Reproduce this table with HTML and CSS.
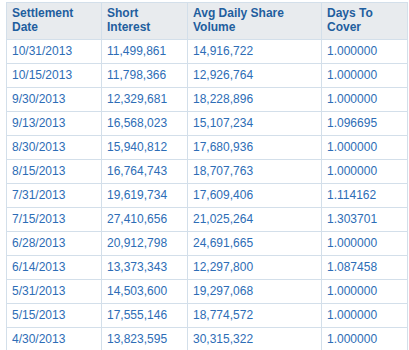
FILE: index.html
```html
<!doctype html>
<html lang="en">
  <head>
    <meta charset="UTF-8">
    <title>Short Interest</title>
    <link rel="stylesheet" href="styles.css">
  </head>
  <body>
    <table class="short-table">
      <colgroup>
        <col class="col-date">
        <col class="col-short">
        <col class="col-avg">
        <col class="col-days">
      </colgroup>
      <thead>
        <tr>
          <th>Settlement<br>Date</th>
          <th>Short<br>Interest</th>
          <th>Avg Daily Share<br>Volume</th>
          <th>Days To<br>Cover</th>
        </tr>
      </thead>
      <tbody>
        <tr><td>10/31/2013</td><td>11,499,861</td><td>14,916,722</td><td>1.000000</td></tr>
        <tr><td>10/15/2013</td><td>11,798,366</td><td>12,926,764</td><td>1.000000</td></tr>
        <tr><td>9/30/2013</td><td>12,329,681</td><td>18,228,896</td><td>1.000000</td></tr>
        <tr><td>9/13/2013</td><td>16,568,023</td><td>15,107,234</td><td>1.096695</td></tr>
        <tr><td>8/30/2013</td><td>15,940,812</td><td>17,680,936</td><td>1.000000</td></tr>
        <tr><td>8/15/2013</td><td>16,764,743</td><td>18,707,763</td><td>1.000000</td></tr>
        <tr><td>7/31/2013</td><td>19,619,734</td><td>17,609,406</td><td>1.114162</td></tr>
        <tr><td>7/15/2013</td><td>27,410,656</td><td>21,025,264</td><td>1.303701</td></tr>
        <tr><td>6/28/2013</td><td>20,912,798</td><td>24,691,665</td><td>1.000000</td></tr>
        <tr><td>6/14/2013</td><td>13,373,343</td><td>12,297,800</td><td>1.087458</td></tr>
        <tr><td>5/31/2013</td><td>14,503,600</td><td>19,297,068</td><td>1.000000</td></tr>
        <tr><td>5/15/2013</td><td>17,555,146</td><td>18,774,572</td><td>1.000000</td></tr>
        <tr><td>4/30/2013</td><td>13,823,595</td><td>30,315,322</td><td>1.000000</td></tr>
      </tbody>
    </table>
  </body>
</html>
```

FILE: styles.css
```css
body {
  margin: 0;
  padding: 2px 0 0 6px;
  background: #fff;
  font-family: 'Liberation Sans', Arial, sans-serif;
  font-size: 12px;
}
.short-table {
  border-collapse: collapse;
  table-layout: fixed;
  width: 401px;
}
.col-date { width: 95px; }
.col-short { width: 86px; }
.col-avg { width: 134px; }
.col-days { width: 86px; }
.short-table th,
.short-table td {
  border: 1px solid #d3dfea;
  text-align: left;
  white-space: nowrap;
}
.short-table th {
  background: #e8ebee;
  color: #1f5e9e;
  font-weight: bold;
  line-height: 14px;
  padding: 3px 5px 5px;
  vertical-align: top;
}
.short-table td {
  color: #2d6db6;
  line-height: 15px;
  padding: 4px 5px;
}
```
